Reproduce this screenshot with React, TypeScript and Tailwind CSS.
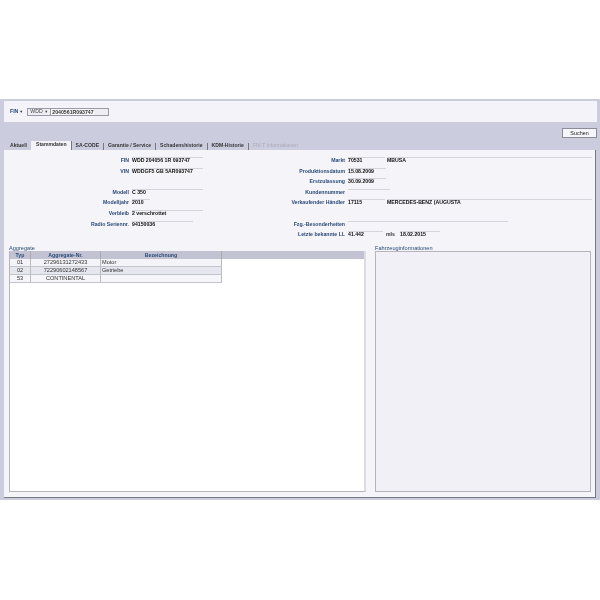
const font = "font-['Liberation_Sans',Arial,sans-serif]";

function Field({ label, w, value, labelW, extra }: { label?: string; w?: number; value?: string; labelW: string; extra?: React.ReactNode }) {
  return (
    <div className="flex h-[10.6px] items-start">
      <div className={`${labelW} shrink-0 mt-[1px] text-right pr-[3px] text-[5.2px] font-bold text-[#2b4a78] leading-[5px] whitespace-nowrap`}>{label}</div>
      {w !== undefined && (
        <div style={{ width: w }} className="h-[10.6px] border-t-[1px] border-[#d4d4dc] text-[5.2px] leading-[5px] text-[#111] font-bold whitespace-nowrap">
          {value}
        </div>
      )}
      {extra}
    </div>
  );
}

function Extra({ ml, w, value }: { ml: number; w: number; value: string }) {
  return (
    <div style={{ width: w, marginLeft: ml }} className="h-[10.6px] border-t-[1px] border-[#d4d4dc] text-[5.2px] leading-[5px] font-bold text-[#111] whitespace-nowrap">
      {value}
    </div>
  );
}

const tabs = ["Aktuell", "Stammdaten", "SA-CODE", "Garantie / Service", "Schadenshistorie", "KDM-Historie", "FIV-T Informationen"];

const rows = [
  ["01", "27296131272433", "Motor", "bg-[#f3f3f8]"],
  ["02", "72290602148567", "Getriebe", "bg-[#e6e6ef]"],
  ["53", "CONTINENTAL", "", "bg-[#f6f6fa]"],
];

export default function App() {
  return (
    <div className={`${font} w-[600px] h-[600px] bg-white pt-[99px] overflow-hidden blur-[0.4px]`}>
      <div className="h-[401px] bg-[#ccccdf] px-[4px] pt-[2px] flex flex-col">
        <div className="h-[21px] bg-[#f3f3f9] mr-[-1px] flex items-center pl-[6px] text-[5.2px] text-[#333]">
          <span className="text-[#2b4a78] font-bold">FIN</span>
          <span className="ml-[1px] text-[4px]">▼</span>
          <div className="ml-[4px] h-[8px] w-[82px] border border-[#9a9aa6] bg-[#eeeef4] flex items-center">
            <span className="w-[22px] pl-[2px] flex items-center justify-between pr-[2px] text-[#444]">WDD<span className="text-[4px]">▼</span></span>
            <span className="font-bold border-l border-[#999] pl-[1px] leading-[6px] text-[5.2px] bg-[#f8f8fb] w-[44px]">2040561R093747</span>
          </div>
        </div>
        <div className="h-[16px] flex justify-end items-end mr-[-1px]">
          <button className="h-[10px] w-[35px] bg-[#f6f6fa] border border-[#8c8c98] text-[5.4px] text-[#222]">Suchen</button>
        </div>
        <div className="h-[12px] flex items-end pl-[2px] text-[5.1px] font-bold text-[#333]">
          {tabs.map((t, i) => (
            <div key={t} className={`flex items-center whitespace-nowrap ${i === 0 ? "h-[7px] mb-[0.5px] px-[4px]" : ""} ${i === 1 ? "bg-[#f3f3f9] h-[9px] pb-[1px] pl-[5px] pr-[4px] border-r border-[#777]" : ""} ${i > 1 && i < 6 ? "h-[7px] mb-[0.5px] px-[4px] border-r border-[#777]" : ""} ${i === 6 ? "h-[7px] mb-[0.5px] px-[4px] text-[#a8a8b4] font-normal" : ""}`}>
              {t}
            </div>
          ))}
        </div>
        <div className="flex-1 bg-[#f4f4f9] border-r border-b border-[#77777f] mb-[2px] pt-[7px] px-[5px] flex flex-col">
          <div className="flex h-[88px]">
            <div className="w-[235px] shrink-0">
              <Field labelW="w-[123px]" label="FIN" w={71} value="WDD 204056 1R 093747" />
              <Field labelW="w-[123px]" label="VIN" w={71} value="WDDGF5 GB 5AR093747" />
              <div className="h-[10.6px]" />
              <Field labelW="w-[123px]" label="Modell" w={71} value="C 350" />
              <Field labelW="w-[123px]" label="Modelljahr" w={18} value="2010" />
              <Field labelW="w-[123px]" label="Verbleib" w={71} value="2 verschrottet" />
              <Field labelW="w-[123px]" label="Radio Seriennr." w={61} value="94150036" />
            </div>
            <div className="flex-1">
              <Field labelW="w-[104px]" label="Markt" w={37} value="70531" extra={<Extra ml={2} w={205} value="MBUSA" />} />
              <Field labelW="w-[104px]" label="Produktionsdatum" w={38} value="15.08.2009" />
              <Field labelW="w-[104px]" label="Erstzulassung" w={38} value="30.09.2009" />
              <Field labelW="w-[104px]" label="Kundennummer" w={42} value="" />
              <Field labelW="w-[104px]" label="Verkaufender Händler" w={37} value="17115" extra={<Extra ml={2} w={205} value="MERCEDES-BENZ (AUGUSTA" />} />
              <div className="h-[10.6px]" />
              <Field labelW="w-[104px]" label="Fzg.-Besonderheiten" w={160} value="" />
              <Field labelW="w-[104px]" label="Letzte bekannte LL" w={35} value="41.442" extra={<><span className="text-[5.2px] leading-[5px] mt-[1px] font-bold text-[#333] ml-[3px] w-[14px]">mls</span><Extra ml={0} w={40} value="18.02.2015" /></>} />
            </div>
          </div>
          <div className="flex-1 flex gap-[9px] pb-[5px]">
            <div className="w-[357px] shrink-0 flex flex-col">
              <div className="h-[6px] text-[5.6px] leading-[6px] text-[#2b4a78]">Aggregate</div>
              <div className="flex-1 bg-white border-l border-b border-[#b4b4ba] border-r-2 border-r-[#dcdce2]">
                <div className="h-[8px] bg-[#c2c2d2] flex text-[5.2px] font-bold text-[#2b4a78] leading-[8px] text-center">
                  <div className="w-[21px] border-r border-[#aaa]">Typ</div>
                  <div className="w-[70px] border-r border-[#aaa]">Aggregate-Nr.</div>
                  <div className="w-[121px] border-r border-[#aaa]">Bezeichnung</div>
                </div>
                {rows.map((r) => (
                  <div key={r[0]} className={`h-[8px] w-[212px] flex text-[5.6px] text-[#333] leading-[7px] border-b border-[#c4c4cc] ${r[3]}`}>
                    <div className="w-[21px] border-r border-[#bbb] text-center">{r[0]}</div>
                    <div className="w-[70px] border-r border-[#bbb] text-center">{r[1]}</div>
                    <div className="w-[121px] border-r border-[#bbb] pl-[1px]">{r[2]}</div>
                  </div>
                ))}
              </div>
            </div>
            <div className="w-[216px] shrink-0 flex flex-col">
              <div className="h-[6px] text-[5.6px] leading-[6px] text-[#2b4a78]">Fahrzeuginformationen</div>
              <div className="flex-1 bg-[#f0f0f6] border border-[#b4b4ba]" />
            </div>
          </div>
        </div>
      </div>
    </div>
  );
}
